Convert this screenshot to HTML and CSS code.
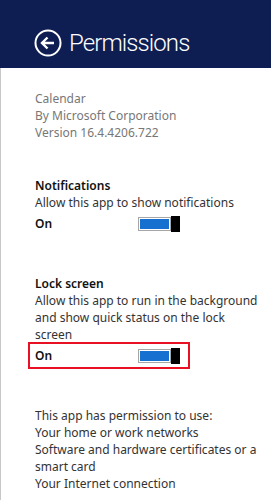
FILE: index.html
```html
<!DOCTYPE html>
<html lang="en">
<head>
    <meta charset="UTF-8">
    <meta name="viewport" content="width=device-width, initial-scale=1.0">
    <title>Permissions</title>
    <link rel="stylesheet" href="styles.css">
</head>
<body>

<div class="header">
    <svg class="back" width="28" height="28" viewBox="0 0 28 28">
        <circle cx="14" cy="14" r="12.5" fill="none" stroke="#fff" stroke-width="2"/>
        <path d="M8 14 H20 M13.5 8.5 L8 14 L13.5 19.5" fill="none" stroke="#fff" stroke-width="2.4"/>
    </svg>
    <h1>Permissions</h1>
</div>

<div class="content">
    <div class="app-info">
        <div>Calendar</div>
        <div>By Microsoft Corporation</div>
        <div>Version 16.4.4206.722</div>
    </div>

    <div class="setting first">
        <div class="title">Notifications</div>
        <div class="desc">Allow this app to show notifications</div>
        <div class="switch-row">
            <span class="state">On</span>
            <span class="toggle"><span class="track"><span class="fill"></span></span><span class="thumb"></span></span>
        </div>
    </div>

    <div class="setting">
        <div class="title">Lock screen</div>
        <div class="desc">Allow this app to run in the background and show quick status on the lock screen</div>
        <div class="switch-row focused">
            <span class="state">On</span>
            <span class="toggle"><span class="track"><span class="fill"></span></span><span class="thumb"></span></span>
        </div>
    </div>

    <div class="uses">
        <div>This app has permission to use:</div>
        <div>Your home or work networks</div>
        <div>Software and hardware certificates or a smart card</div>
        <div>Your Internet connection</div>
    </div>
</div>

</body>
</html>
```

FILE: styles.css
```css
body {
    margin: 0;
    font-family: 'Noto Sans', 'Open Sans', sans-serif;
    font-size: 12px;
    line-height: 17px;
    color: #222;
    background: #fff;
}

.header {
    height: 68px;
    background-color: #0e1e52;
    color: #fff;
    display: flex;
    align-items: center;
    padding: 17px 0 0 34px;
    box-sizing: border-box;
}

.back {
    flex: none;
    margin-right: 7px;
}

.header h1 {
    margin: 0;
    font-family: 'Roboto', sans-serif;
    font-weight: 300;
    font-size: 24px;
    line-height: 30px;
    letter-spacing: -0.9px;
}

.content {
    border-left: 1px solid #c8c8c8;
    padding: 22px 10px 0 34px;
    height: calc(100vh - 68px);
    box-sizing: border-box;
    overflow: hidden;
}

.app-info {
    color: #777;
}

.setting {
    margin-top: 38px;
}

.setting.first {
    margin-top: 36px;
}

.title {
    font-weight: 600;
    color: #111;
}

.desc {
    color: #333;
    width: 225px;
}

.switch-row {
    display: flex;
    align-items: center;
    box-sizing: border-box;
    width: 162px;
    height: 27px;
    margin-left: -7px;
    margin-top: -1px;
    padding: 0 8px 0 5px;
    border: 2px solid transparent;
}

.switch-row.focused {
    border-color: #e81123;
}

.state {
    font-weight: 600;
    color: #111;
    width: 103px;
}

.toggle {
    display: flex;
    align-items: center;
    height: 16px;
}

.track {
    width: 33px;
    height: 14px;
    border: 1px solid #a6a6a6;
    padding: 1px;
    background: #fff;
    box-sizing: border-box;
    display: flex;
}

.fill {
    flex: 1;
    background: #1570d0;
}

.thumb {
    width: 9px;
    height: 16px;
    background: #000;
}

.uses {
    margin-top: 38px;
    color: #333;
    width: 225px;
}
```
